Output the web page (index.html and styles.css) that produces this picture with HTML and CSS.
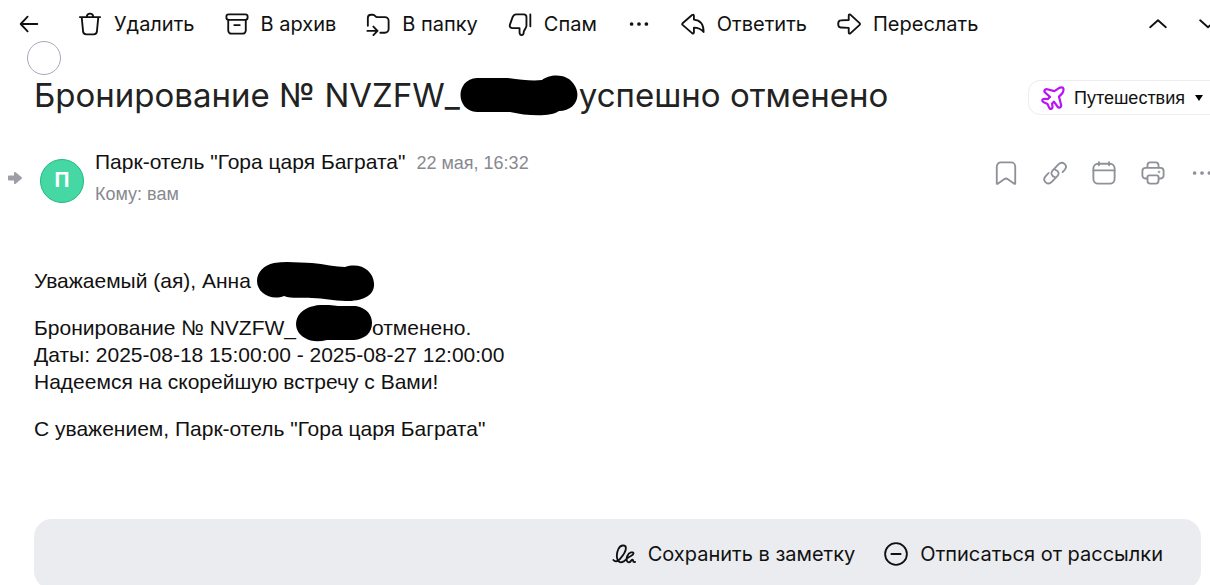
FILE: index.html
```html
<!DOCTYPE html>
<html lang="ru">
<head>
<meta charset="utf-8">
<meta name="viewport" content="width=device-width, initial-scale=1">
<title>Бронирование отменено</title>
<link rel="stylesheet" href="styles.css">
</head>
<body>
<header class="toolbar">
  <button class="tool back" type="button" aria-label="Назад">
    <svg class="icon" viewBox="0 0 26 26"><path d="M22 13H4M11.500 5 4 13l7.500 8"/></svg>
  </button>
  <button class="tool" type="button">
    <svg class="icon" viewBox="0 0 26 26"><path d="M2 5.500h22M4 5.500l1.500 15.500a3.500 3.500 0 0 0 3.500 3.200h8a3.500 3.500 0 0 0 3.500-3.200L22 5.500M9.500 5c.3-4.300 6.700-4.300 7 0"/></svg>
    <span>Удалить</span>
  </button>
  <button class="tool" type="button">
    <svg class="icon" viewBox="0 0 26 26"><rect x="1.500" y="2.500" width="23" height="6" rx="2.500"/><path d="M3.500 8.500V20A3.500 3.500 0 0 0 7 23.500h12a3.500 3.500 0 0 0 3.500-3.500V8.500M10 14.200h6"/></svg>
    <span>В архив</span>
  </button>
  <button class="tool" type="button">
    <svg class="icon" viewBox="0 0 26 26"><path d="M2 15V6.500Q2 3 5.500 3h2c2.500 0 2.500 2.500 4.500 2.500h8.500a4 4 0 0 1 4 4v9a4 4 0 0 1-4 4H15.500M1.500 20.500h10.500M8 15.800l4.500 4.700L8 25"/></svg>
    <span>В папку</span>
  </button>
  <button class="tool" type="button">
    <svg class="icon" viewBox="0 0 26 26"><path d="M9 2.500h8a3 3 0 0 1 3 3V15c0 3-3 4-3 7 0 1.500-.8 3-2.200 3-1.600 0-2.300-1.500-2.300-3v-4.500H5c-2.500 0-3.500-1.800-3-3.500l3-8.500C5.800 3.500 7 2.500 9 2.500ZM24.200 2.500v13"/></svg>
    <span>Спам</span>
  </button>
  <button class="tool" type="button" aria-label="Ещё">
    <svg class="icon dots" viewBox="0 0 26 26"><circle cx="5" cy="13" r="2"/><circle cx="13" cy="13" r="2"/><circle cx="21" cy="13" r="2"/></svg>
  </button>
  <button class="tool" type="button">
    <svg class="icon" viewBox="0 0 26 26"><path d="M1.700 12.200 12 3.300q2-1.200 2 1v3.900c5.500.4 10.500 4 10.500 13.500-2.500-3-5-4.700-10.500-4.800v5q0 2.200-2 1L1.700 14q-.8-.8 0-1.800Z"/></svg>
    <span>Ответить</span>
  </button>
  <button class="tool" type="button">
    <svg class="icon" viewBox="0 0 26 26"><path d="m24.500 12-10-9.200Q12.700 2 12.700 4v4.700L4 9c-1.800 0-2.700 1.500-2.700 4s.9 3.700 2.700 3.800l8.700.4V22q0 2 1.800 1.200L24.500 14q.8-1 0-2Z"/></svg>
    <span>Переслать</span>
  </button>
  <nav class="pager" aria-label="Письма">
    <button class="tool" type="button" aria-label="Предыдущее"><svg class="icon" viewBox="0 0 26 26"><path d="m4.500 16.500 8.500-7.500 8.500 7.500"/></svg></button>
    <button class="tool" type="button" aria-label="Следующее"><svg class="icon" viewBox="0 0 26 26"><path d="m4.500 9 8.500 7.500L21.500 9"/></svg></button>
  </nav>
</header>

<main class="letter">
  <input class="select" type="checkbox" aria-label="Выбрать письмо">
  <div class="subject">
    <h1 class="title">Бронирование № NVZFW_<span class="blot blot-title"><svg viewBox="0 0 118 41"><path d="M17 3H48C62 5 73 6 82 5C89-1 108-3 115 11C122 24 113 36 99 36C91 42 67 41 50 37H17C-5 36-5 4 17 3Z"/></svg></span>успешно отменено</h1>
    <button class="category" type="button">
      <svg class="icon plane" viewBox="0 0 26 26"><path d="M14.500 5.500 19 2.500c2-1.300 5-1.500 5.300.3.300 2-.3 3.700-1.300 5.200l-3.500 3.500 2.300 9c.5 2.500-2.300 4-3.800 2l-4-5.500-2 2 .5 3.500c0 2.500-2.500 3-3.500 1.200L7 19.500l-4.500-2.200c-2-1-1.300-3.500 1.200-3.500l3.500.5 2.500-2.500-5-4.500c-2-1.600-.7-4.300 2-3.800Z"/></svg>
      <span>Путешествия</span>
      <svg class="caret" viewBox="0 0 10 8"><path d="M1 1h8L5 7Z"/></svg>
    </button>
  </div>

  <section class="sender">
    <svg class="pointer" viewBox="0 0 16 14"><path d="M2 5.500h6v-3.500L14 7 8 12V8.500H2Z"/></svg>
    <span class="avatar">П</span>
    <div class="who">
      <div class="from"><span class="name">Парк-отель "Гора царя Баграта"</span><time class="muted">22 мая, 16:32</time></div>
      <div class="muted">Кому: вам</div>
    </div>
    <div class="actions">
      <button class="tool" type="button" aria-label="Закладка"><svg class="icon" viewBox="0 0 26 26"><path d="M3 24V6a4.500 4.500 0 0 1 4.500-4.500h11A4.500 4.500 0 0 1 23 6v18q0 1.200-1 .7l-7-5q-2-1.400-4 0l-7 5q-1 .5-1-.7Z"/></svg></button>
      <button class="tool" type="button" aria-label="Ссылка"><svg class="icon" viewBox="0 0 26 26"><path d="M12.500 17.200C9.200 16.300 8 12.800 10.500 10.200l6.500-6.700c2-2 4.500-2 6.300-.4s2 4.300.2 6.400l-2.300 2.500M13.500 9.500c3.300.9 4.500 4.400 2 7l-6 6.200c-2 2-4.800 2-6.600.4s-2-4.300-.2-6.400l3.300-3.700"/></svg></button>
      <button class="tool" type="button" aria-label="Календарь"><svg class="icon" viewBox="0 0 26 26"><rect x="1.500" y="3" width="23" height="21.500" rx="5"/><path d="M1.500 10.200h23M7.500 1.200v3.500M18.500 1.200v3.500"/></svg></button>
      <button class="tool" type="button" aria-label="Печать"><svg class="icon" viewBox="0 0 26 26"><path d="M7 7.500V5q0-3.500 3-3.500h6q3 0 3 3.500v2.500M7 19H5.500q-4 0-4-3.500V11q0-3.500 3.500-3.500h16q3.500 0 3.500 3.500v4.500q0 3.500-4 3.500H19M9 15.500h8q2 0 2 2v4q0 3-3 3h-6q-3 0-3-3v-4q0-2 2-2Z"/><circle cx="19.500" cy="12" r=".4"/></svg></button>
      <button class="tool" type="button" aria-label="Ещё"><svg class="icon dots" viewBox="0 0 26 26"><circle cx="5" cy="13" r="2"/><circle cx="13" cy="13" r="2"/><circle cx="21" cy="13" r="2"/></svg></button>
    </div>
  </section>

  <article class="text">
    <p>Уважаемый (ая), Анна <span class="blot blot-name"><svg viewBox="0 0 118 40"><path d="M17 1C30-1 44 1 55 1C67 2 79 5 88 5C104 0 116 9 117 21C118 34 105 39 89 39C76 39 67 36 55 36C45 35 35 37 27 34C14 39 0 31 0 19C0 10 7 3 17 1Z"/></svg></span></p>
    <p>Бронирование № NVZFW_<span class="blot blot-code"><svg viewBox="0 0 76 37"><path d="M18 1C25-1 36 0 42 1H60C71 3 76 10 76 18C76 28 69 34 58 35H31C23 37 15 37 9 33C-5 26-3 5 18 1Z"/></svg></span>отменено.<br>Даты: 2025-08-18 15:00:00 - 2025-08-27 12:00:00<br>Надеемся на скорейшую встречу с Вами!</p>
    <p>С уважением, Парк-отель "Гора царя Баграта"</p>
  </article>

  <footer class="card">
    <button class="tool" type="button">
      <svg class="icon" viewBox="0 0 26 26"><path d="M1.500 19.500c1.500 2 4.500 2 7-1 3.500-4 7-8.500 6.500-12.500-.4-3-5.500-3.300-8 1.500C4 13.500 5 22 9.500 22c2.500 0 5-2 7-4.200 2-2.300 6.800-3 6.800-5.300s-5-1.700-6.800 2.800c-1.500 4-.5 6.700 1.700 6.700s2.500-2.800 4-2.800-.2 3.300 2.800 2.300"/></svg>
      <span>Сохранить в заметку</span>
    </button>
    <button class="tool" type="button">
      <svg class="icon" viewBox="0 0 26 26"><circle cx="13" cy="13" r="11.800"/><path d="M8 13h10"/></svg>
      <span>Отписаться от рассылки</span>
    </button>
  </footer>
</main>
</body>
</html>
```
FILE: styles.css
```css
* {
  box-sizing: border-box;
}

body {
  margin: 0;
  height: 100vh;
  overflow: hidden;
  background: #fff;
  color: #111;
  font: 21px/27px "Liberation Sans", Arial, sans-serif;
}

button {
  padding: 0;
  border: 0;
  background: none;
  color: inherit;
  white-space: nowrap;
  cursor: pointer;
}

.toolbar {
  display: flex;
  align-items: center;
  gap: 30px;
  height: 41px;
  padding: 7px 0 0 17px;
}

.tool {
  display: flex;
  flex: none;
  align-items: center;
  gap: 12px;
  height: 32px;
  font: 20px/28px Inter, sans-serif;
}

.back {
  margin-right: 7px;
}

.icon {
  flex: none;
  width: 24px;
  height: 24px;
  fill: none;
  stroke: currentColor;
  stroke-width: 2;
  stroke-linecap: round;
  stroke-linejoin: round;
}

.dots {
  fill: currentColor;
  stroke: none;
}

.pager {
  display: flex;
  gap: 26px;
  margin: 0 -10px 0 auto;
}

.select {
  display: block;
  appearance: none;
  width: 34px;
  height: 34px;
  margin: 0 0 0 27px;
  border: 1px solid #aaa6bc;
  border-radius: 50%;
}

.subject {
  display: flex;
  align-items: center;
  justify-content: space-between;
  padding-left: 34px;
}

.title {
  margin: 0;
  font: 400 33px/40px Inter, sans-serif;
  color: #222;
  white-space: nowrap;
}

.blot {
  position: relative;
  display: inline-block;
  height: 1px;
}

.blot svg {
  position: absolute;
  left: 0;
}

.blot-title {
  width: 119px;
}

.blot-title svg {
  top: -31px;
  width: 118px;
}

.blot-name {
  width: 118px;
}

.blot-name svg {
  top: -25px;
  width: 118px;
}

.blot-code {
  width: 76px;
}

.blot-code svg {
  top: -29px;
  width: 76px;
}

.category {
  display: flex;
  flex: none;
  align-items: center;
  gap: 9px;
  height: 35px;
  margin: 5px -14px 0 0;
  padding: 0 19px 0 12px;
  border: 1px solid #ececf1;
  border-radius: 12px;
  font: 18px/24px "Liberation Sans", Arial, sans-serif;
}

.plane {
  color: #b814f5;
  stroke-width: 2.4;
}

.caret {
  width: 10px;
  height: 8px;
}

.sender {
  display: flex;
  padding: 33px 0 0 7px;
}

.pointer {
  flex: none;
  width: 16px;
  height: 14px;
  margin: 23px 17px 0 0;
  fill: #9e9fa6;
  stroke: #9e9fa6;
  stroke-width: 2;
  stroke-linejoin: round;
}

.avatar {
  flex: none;
  width: 44px;
  height: 44px;
  margin: 11px 11px 0 0;
  border: 1px solid #20ba80;
  border-radius: 50%;
  background: #45d8a5;
  color: #fff;
  font: 700 20px/41px Inter, sans-serif;
  text-align: center;
}

.from {
  display: flex;
  align-items: baseline;
  gap: 11px;
  margin-bottom: 4px;
}

.muted {
  color: #87898f;
  font-size: 18px;
}

.actions {
  display: flex;
  gap: 25px;
  margin: 9px -4px 0 auto;
  color: #8f9199;
}

.text {
  padding: 59px 34px 0;
}

.text p {
  margin: 0 0 20px;
}

.card {
  display: flex;
  align-items: center;
  justify-content: flex-end;
  gap: 29px;
  height: 70px;
  margin: 77px 9px 0 34px;
  padding-right: 38px;
  border-radius: 18px;
  background: #ebecf0;
}
```
